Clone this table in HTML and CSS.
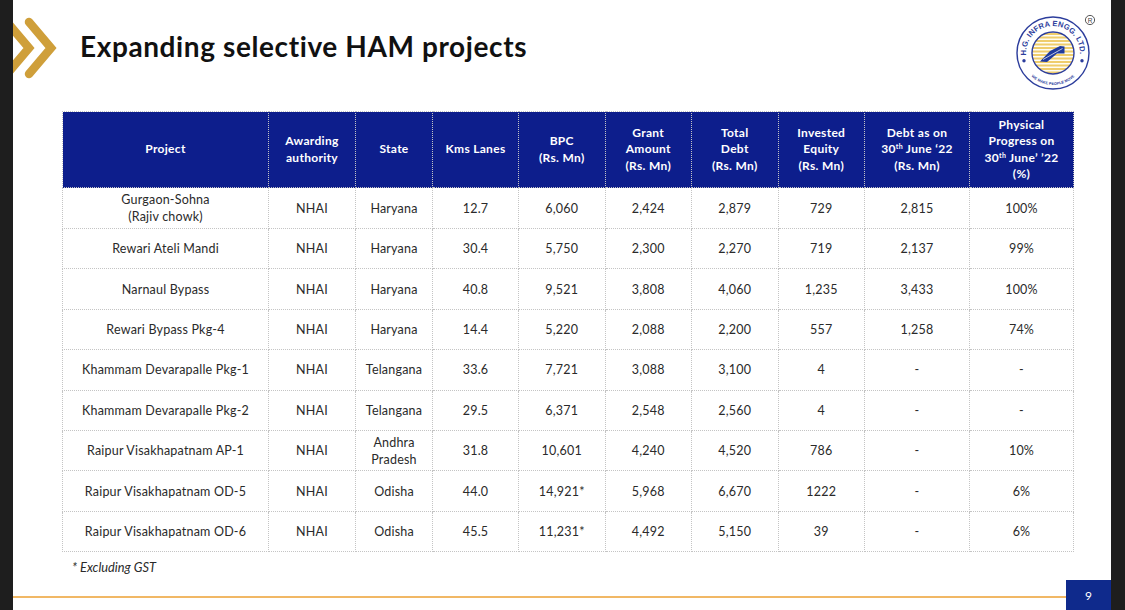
FILE: index.html
```html
<!DOCTYPE html>
<html lang="en">
<head>
<meta charset="utf-8">
<title>Expanding selective HAM projects</title>
<link rel="stylesheet" href="styles.css">
</head>
<body>
<div class="strip"></div>
<div class="slide">
  <header class="top">
    <svg class="chev" width="54" height="96" viewBox="0 0 54 96" aria-hidden="true">
      <polyline points="-6,22 16,48 -6,74" fill="none" stroke="#cf9f3a" stroke-width="8.5" stroke-linecap="round" stroke-linejoin="miter"/>
      <polyline points="16,22 38,48 16,74" fill="none" stroke="#cf9f3a" stroke-width="8.5" stroke-linecap="round" stroke-linejoin="miter"/>
    </svg>
    <h1 class="title">Expanding selective HAM projects</h1>
    <svg class="logo" width="84" height="80" viewBox="0 0 84 80" aria-label="H.G. Infra Engg. Ltd.">
      <defs>
        <path id="arcTop" d="M 13.1 42.4 A 27 27 0 1 1 66.9 42.4"/>
        <path id="arcBot" d="M 17.4 62.6 A 32 32 0 0 0 62.6 62.6"/>
        <clipPath id="inner"><circle cx="40" cy="40" r="21"/></clipPath>
      </defs>
      <circle cx="40" cy="40" r="36" fill="#fff" stroke="#2c3d9c" stroke-width="1.4"/>
      <text class="ring" font-size="7.6"><textPath href="#arcTop" textLength="88" lengthAdjust="spacing">H.G. INFRA ENGG. LTD.</textPath></text>
      <text class="ring" font-size="3.8"><textPath href="#arcBot" startOffset="50%" text-anchor="middle">WE MAKE PEOPLE MOVE</textPath></text>
      <circle cx="11" cy="47.8" r="1.7" fill="#2c3d9c"/>
      <circle cx="69" cy="47.8" r="1.7" fill="#2c3d9c"/>
      <g clip-path="url(#inner)">
        <rect x="18" y="18" width="44" height="44" fill="#fffdf3"/>
        <g stroke="#efcd6c" stroke-width="1.8">
          <line x1="18" y1="21" x2="62" y2="21"/><line x1="18" y1="24.5" x2="62" y2="24.5"/>
          <line x1="18" y1="28" x2="62" y2="28"/><line x1="18" y1="31.5" x2="62" y2="31.5"/>
          <line x1="18" y1="35" x2="62" y2="35"/><line x1="18" y1="38.5" x2="62" y2="38.5"/>
          <line x1="18" y1="42" x2="62" y2="42"/><line x1="18" y1="45.5" x2="62" y2="45.5"/>
          <line x1="18" y1="49" x2="62" y2="49"/><line x1="18" y1="52.5" x2="62" y2="52.5"/>
          <line x1="18" y1="56" x2="62" y2="56"/><line x1="18" y1="59.5" x2="62" y2="59.5"/>
        </g>
      </g>
      <circle cx="40" cy="40" r="21" fill="none" stroke="#2c3d9c" stroke-width="1.4"/>
      <polygon points="27,48.5 37,38 47,33 51.5,33.5 51.5,40.5 44,40.5 34,49" fill="#1f3a9e"/>
      <line x1="30" y1="46.5" x2="49.5" y2="35.5" stroke="#fff" stroke-width="0.7"/>
      <circle cx="77" cy="7" r="4.6" fill="#fff" stroke="#444" stroke-width="0.9"/>
      <text x="77" y="9.5" class="reg" font-size="6.5" text-anchor="middle">R</text>
    </svg>
  </header>

  <table class="grid">
    <colgroup>
      <col class="c-proj"><col class="c-auth"><col class="c-state"><col class="c-kms">
      <col class="c-num"><col class="c-num"><col class="c-num"><col class="c-num">
      <col class="c-debt"><col class="c-prog">
    </colgroup>
    <thead>
      <tr>
        <th>Project</th>
        <th>Awarding<br>authority</th>
        <th>State</th>
        <th>Kms Lanes</th>
        <th>BPC<br>(Rs. Mn)</th>
        <th>Grant<br>Amount<br>(Rs. Mn)</th>
        <th>Total<br>Debt<br>(Rs. Mn)</th>
        <th>Invested<br>Equity<br>(Rs. Mn)</th>
        <th>Debt as on<br>30<sup>th</sup> June ‘22<br>(Rs. Mn)</th>
        <th>Physical<br>Progress on<br>30<sup>th</sup> June’ ’22<br>(%)</th>
      </tr>
    </thead>
    <tbody>
      <tr class="first"><td>Gurgaon-Sohna<br>(Rajiv chowk)</td><td>NHAI</td><td>Haryana</td><td>12.7</td><td>6,060</td><td>2,424</td><td>2,879</td><td>729</td><td>2,815</td><td>100%</td></tr>
      <tr><td>Rewari Ateli Mandi</td><td>NHAI</td><td>Haryana</td><td>30.4</td><td>5,750</td><td>2,300</td><td>2,270</td><td>719</td><td>2,137</td><td>99%</td></tr>
      <tr><td>Narnaul Bypass</td><td>NHAI</td><td>Haryana</td><td>40.8</td><td>9,521</td><td>3,808</td><td>4,060</td><td>1,235</td><td>3,433</td><td>100%</td></tr>
      <tr><td>Rewari Bypass Pkg-4</td><td>NHAI</td><td>Haryana</td><td>14.4</td><td>5,220</td><td>2,088</td><td>2,200</td><td>557</td><td>1,258</td><td>74%</td></tr>
      <tr><td>Khammam Devarapalle Pkg-1</td><td>NHAI</td><td>Telangana</td><td>33.6</td><td>7,721</td><td>3,088</td><td>3,100</td><td>4</td><td>-</td><td>-</td></tr>
      <tr><td>Khammam Devarapalle Pkg-2</td><td>NHAI</td><td>Telangana</td><td>29.5</td><td>6,371</td><td>2,548</td><td>2,560</td><td>4</td><td>-</td><td>-</td></tr>
      <tr><td>Raipur Visakhapatnam AP-1</td><td>NHAI</td><td>Andhra<br>Pradesh</td><td>31.8</td><td>10,601</td><td>4,240</td><td>4,520</td><td>786</td><td>-</td><td>10%</td></tr>
      <tr><td>Raipur Visakhapatnam OD-5</td><td>NHAI</td><td>Odisha</td><td>44.0</td><td>14,921*</td><td>5,968</td><td>6,670</td><td>1222</td><td>-</td><td>6%</td></tr>
      <tr><td>Raipur Visakhapatnam OD-6</td><td>NHAI</td><td>Odisha</td><td>45.5</td><td>11,231*</td><td>4,492</td><td>5,150</td><td>39</td><td>-</td><td>6%</td></tr>
    </tbody>
  </table>

  <p class="note">* Excluding GST</p>

  <footer class="foot">
    <div class="rule"></div>
    <div class="page">9</div>
  </footer>
</div>
<div class="strip strip-r"></div>
</body>
</html>
```

FILE: styles.css
```css
* { box-sizing: border-box; }

html, body {
  margin: 0;
  padding: 0;
  height: 610px;
  overflow: hidden;
  background: #1e1e1e;
}

body {
  display: flex;
  font-family: Lato, "Open Sans", "Liberation Sans", sans-serif;
  color: #2a2a2a;
}

.strip {
  width: 13px;
  flex: none;
  background: #1e1e1e;
}

.strip-r {
  width: 14px;
}

.slide {
  flex: 1;
  background: #fff;
  display: flex;
  flex-direction: column;
  height: 610px;
}

.top {
  display: flex;
  align-items: flex-start;
  height: 111px;
  flex: none;
}

.chev {
  flex: none;
  display: block;
}

.title {
  margin: 30px 0 0 13px;
  font-size: 28px;
  line-height: 32px;
  font-weight: 700;
  color: #111;
  letter-spacing: 0.6px;
}

.logo {
  flex: none;
  margin: 13px 14px 0 auto;
  display: block;
}

.logo .ring {
  font-family: "Liberation Sans", Arial, sans-serif;
  font-weight: 700;
  fill: #2c3d9c;
}

.logo .reg {
  font-family: "Liberation Sans", Arial, sans-serif;
  fill: #444;
}

.grid {
  margin-left: 49px;
  width: 1010px;
  border-collapse: collapse;
  table-layout: fixed;
  flex: none;
}

.c-proj { width: 206px; }
.c-auth { width: 87px; }
.c-state { width: 77px; }
.c-kms { width: 86px; }
.c-num { width: 86.5px; }
.c-debt { width: 105px; }
.c-prog { width: 104px; }

.grid th,
.grid td {
  border: 1px dotted #c4c4c4;
  text-align: center;
  vertical-align: middle;
  padding: 0 4px;
}

.grid th {
  background: #0d1e8c;
  color: #fff;
  font-size: 12px;
  font-weight: 700;
  line-height: 16.5px;
  height: 76px;
  letter-spacing: 0.3px;
}

.grid th sup,
.grid td sup {
  font-size: 7px;
  vertical-align: 4px;
  line-height: 0;
}

.grid td {
  font-size: 12.5px;
  line-height: 17px;
  height: 40.4px;
  color: #2a2a2a;
  letter-spacing: 0.2px;
}

.grid tr.first td {
  height: 41px;
}

.note {
  margin: 8px 0 0 59px;
  font-size: 12.8px;
  line-height: 15px;
  font-style: italic;
  color: #2a2a2a;
}

.foot {
  margin-top: auto;
  display: flex;
  align-items: center;
  height: 30px;
  flex: none;
}

.rule {
  flex: 1;
  height: 2px;
  margin-top: 4px;
  background: #f1b865;
}

.page {
  width: 45px;
  height: 30px;
  background: #0f2a8c;
  color: #fff;
  font-size: 12px;
  display: flex;
  align-items: center;
  justify-content: center;
}
```
